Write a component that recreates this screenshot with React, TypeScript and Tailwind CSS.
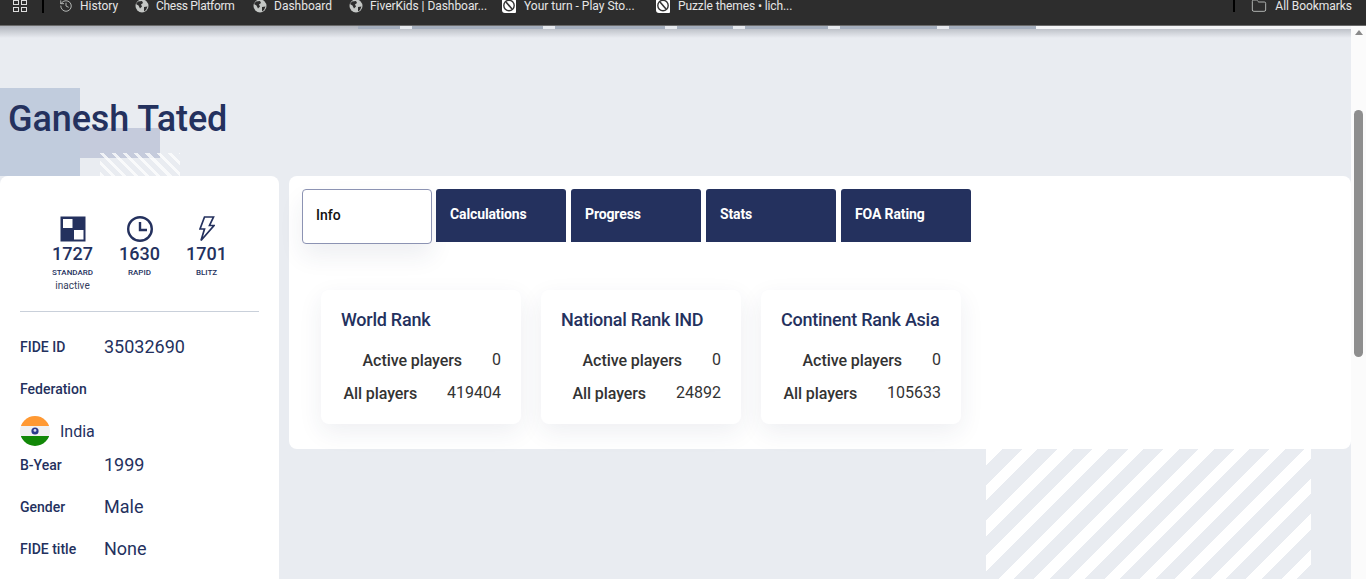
import React from 'react'
import { History, Folder } from 'lucide-react'

const Globe = () => (
    <svg width="14" height="14" viewBox="0 0 14 14" className="shrink-0">
        <circle cx="7" cy="7" r="6.5" fill="#c4c7c5" />
        <path d="M3 2.5 L7 2 L8 4 L6 5.5 L7 7.5 L5 9.5 L3.5 6.5 L1 5 Z M9 8 L12.5 7.5 L11 11 L9 12.5 Z" fill="#2d2d2d" />
    </svg>
)

const Lichess = () => (
    <svg width="16" height="17" viewBox="0 0 16 17" className="shrink-0">
        <path d="M4 1 H12 Q15 1 15 4 V15 Q15 16 14 16 H4 Q1 16 1 13 V4 Q1 1 4 1 Z" fill="#fff" />
        <circle cx="8" cy="8.5" r="5.2" fill="none" stroke="#333" strokeWidth="1.4" />
        <path d="M5 5 L11 12" stroke="#333" strokeWidth="1.6" />
    </svg>
)

const bookmarks = [
    { label: 'Chess Platform', icon: <Globe />, w: 'w-[118px]', t: 'tracking-[-0.3px]' },
    { label: 'Dashboard', icon: <Globe />, w: 'w-[96px]', t: '' },
    { label: 'FiverKids | Dashboar...', icon: <Globe />, w: 'w-[152px]', t: 'tracking-[-0.05px]' },
    { label: 'Your turn - Play Sto...', icon: <Lichess />, w: 'w-[154px]', t: '' },
    { label: 'Puzzle themes • lich...', icon: <Lichess />, w: 'w-[150px]', t: 'tracking-[-0.1px]' },
]

const BookmarksBar = () => (
    <div className="relative z-20 flex h-[26px] shrink-0 items-start border-b border-[#6a6a6a] bg-[#2d2d2d] font-['Roboto',sans-serif] text-[12px] leading-[12px] text-[#e6e6e6]">
        <div className="ml-[13px] grid h-[12px] w-[14px] grid-cols-2 gap-[2px] overflow-hidden">
            <span className="h-[5px] border border-[#ddd]" />
            <span className="h-[5px] border border-[#ddd]" />
            <span className="h-[5px] border border-[#ddd]" />
            <span className="h-[5px] border border-[#ddd]" />
        </div>
        <div className="ml-[15px] h-[13px] w-[2px] bg-black" />
        <div className="ml-[15px] flex h-[11px] w-[76px] items-center gap-[7px]">
            <History size={14} strokeWidth={1.5} className="shrink-0 text-[#c4c7c5]" />
            <span>History</span>
        </div>
        {bookmarks.map((b) => (
            <div key={b.label} className={`flex h-[11px] items-center gap-[7px] whitespace-nowrap ${b.w}`}>
                {b.icon}
                <span className={b.t}>{b.label}</span>
            </div>
        ))}
        <div className="ml-auto mr-[14px] flex h-[11px] items-center">
            <div className="mr-[16px] h-[13px] w-[2px] bg-black" />
            <Folder size={16} strokeWidth={1.3} className="mr-[8px] shrink-0 text-[#c4c7c5]" />
            <span className="tracking-[-0.05px]">All Bookmarks</span>
        </div>
    </div>
)

const stats = [
    { value: '1727', label: 'STANDARD', note: 'inactive', icon: 'board' },
    { value: '1630', label: 'RAPID', note: '', icon: 'clock' },
    { value: '1701', label: 'BLITZ', note: '', icon: 'bolt' },
]

const StatIcon = ({ name }: { name: string }) => {
    if (name === 'board') {
        return (
            <svg width="26" height="26" viewBox="0 0 26 26">
                <rect x="0.5" y="0.5" width="25" height="25" fill="#24315e" />
                <rect x="3" y="3" width="9.5" height="9" fill="#fff" />
                <rect x="14" y="14" width="9.5" height="9.5" fill="#fff" />
            </svg>
        )
    }
    if (name === 'clock') {
        return (
            <svg width="26" height="26" viewBox="0 0 26 26" fill="none" stroke="#24315e" strokeWidth="2.4">
                <circle cx="13" cy="13" r="11.8" />
                <path d="M13 6 V14 H20" />
            </svg>
        )
    }
    return (
        <svg width="16" height="26" viewBox="0 0 16 26" fill="none" stroke="#24315e" strokeWidth="1.7" strokeLinejoin="miter">
            <path d="M5.5 1 H14.5 L10.5 9.5 H15 L2 24.5 L5.5 13 H1 Z" />
        </svg>
    )
}

const details = [
    { label: 'B-Year', value: '1999' },
    { label: 'Gender', value: 'Male' },
    { label: 'FIDE title', value: 'None' },
]

const Sidebar = () => (
    <aside className="h-[500px] w-[279px] shrink-0 rounded-t-[8px] bg-white px-[20px] pt-[40px]">
        <div className="flex justify-center gap-[27px] border-b border-[#c9d0da] pb-[18px]">
            {stats.map((s) => (
                <div key={s.label} className="flex w-[40px] flex-col items-center">
                    <StatIcon name={s.icon} />
                    <div className="-mt-[1px] text-[18px] font-medium leading-[25px] text-[#24315e]">{s.value}</div>
                    <div className="mt-[1px] text-[8px] font-medium leading-[12px] text-[#24315e]">{s.label}</div>
                    <div className="h-[14px] whitespace-nowrap text-[10px] leading-[14px] text-[#333c5c]">{s.note}</div>
                </div>
            ))}
        </div>
        <div className="mt-[14px] flex h-[42px] items-center">
            <div className="w-[84px] text-[14px] font-medium text-[#24315e]">FIDE ID</div>
            <div className="pb-[2px] text-[18px] text-[#24315e]">35032690</div>
        </div>
        <div className="flex h-[42px] items-center text-[14px] font-medium text-[#24315e]">Federation</div>
        <div className="mb-[-2px] mt-[6px] flex h-[30px] items-center gap-[10px]">
            <svg width="30" height="30" viewBox="0 0 30 30" className="shrink-0">
                <defs>
                    <clipPath id="flag">
                        <circle cx="15" cy="15" r="15" />
                    </clipPath>
                </defs>
                <g clipPath="url(#flag)">
                    <rect width="30" height="10" fill="#ff9933" />
                    <rect y="10" width="30" height="10" fill="#f1f1f1" />
                    <rect y="20" width="30" height="10" fill="#128807" />
                </g>
                <circle cx="15" cy="15" r="3.6" fill="#2b3a8c" />
                <circle cx="15" cy="14.4" r="1.4" fill="#d8dcf0" />
            </svg>
            <span className="pt-[2px] text-[16px] text-[#24315e]">India</span>
        </div>
        {details.map((d) => (
            <div key={d.label} className="flex h-[42px] items-center">
                <div className="w-[84px] text-[14px] font-medium text-[#24315e]">{d.label}</div>
                <div className="pb-[2px] text-[18px] text-[#24315e]">{d.value}</div>
            </div>
        ))}
    </aside>
)

const tabs = ['Calculations', 'Progress', 'Stats', 'FOA Rating']

const ranks = [
    { title: 'World Rank', active: '0', all: '419404' },
    { title: 'National Rank IND', active: '0', all: '24892' },
    { title: 'Continent Rank Asia', active: '0', all: '105633' },
]

const RankCard = ({ title, active, all }: { title: string; active: string; all: string }) => (
    <div className="h-[134px] w-[200px] rounded-[8px] bg-white px-[20px] pt-[17px] shadow-[0_8px_24px_rgba(36,49,94,0.08)]">
        <div className="whitespace-nowrap text-[18px] font-medium leading-[26px] tracking-[-0.25px] text-[#24315e]">{title}</div>
        <div className="mt-[14px] flex h-[26px] items-center justify-end">
            <span className="pt-[2px] text-[16px] font-medium tracking-[-0.08px] text-[#333]">Active players</span>
            <span className="ml-[30px] text-[16px] text-[#333]">{active}</span>
        </div>
        <div className="mt-[7px] flex h-[26px] items-center justify-end">
            <span className="pt-[2px] text-[16px] font-medium tracking-[-0.08px] text-[#333]">All players</span>
            <span className="ml-[30px] text-[16px] text-[#333]">{all}</span>
        </div>
    </div>
)

const stripBlocks = ['w-[42px]', 'w-[131px]', 'w-[110px]', 'w-[56px]', 'w-[83px]', 'w-[97px]', 'w-[87px]']

const App = () => {
    return (
        <div className="flex h-[579px] w-[1366px] flex-col overflow-hidden bg-white font-['Roboto',sans-serif]">
            <BookmarksBar />
            <div className="flex min-h-0 flex-1">
                <main className="relative min-w-0 flex-1 overflow-hidden bg-[#e9ecf1]">
                    {/* decorations behind the content */}
                    <div className="absolute left-0 top-[62px] h-[88px] w-[80px] bg-[#c1ccdd]" />
                    <div className="absolute left-[80px] top-[102px] h-[30px] w-[80px] bg-[#c5cbdc]" />
                    <div className="absolute left-[100px] top-[127px] h-[30px] w-[80px] bg-[repeating-linear-gradient(45deg,transparent_0,transparent_5px,rgba(255,255,255,0.75)_5px,rgba(255,255,255,0.75)_8px)]" />
                    <div className="absolute left-[986px] top-[404px] h-[160px] w-[325px] bg-[repeating-linear-gradient(135deg,#e9ecf1_0,#e9ecf1_14px,#ffffff_14px,#ffffff_25px)]" />
                    <div className="absolute inset-x-0 top-0 h-[12px] bg-gradient-to-b from-[#b0b4bc] to-transparent" />
                    <div className="absolute inset-x-0 top-0 flex h-[3px]">
                        <div className="w-[358px] shrink-0" />
                        {stripBlocks.map((w, i) => (
                            <React.Fragment key={i}>
                                <div className={`shrink-0 bg-[#a4aebd] ${w}`} />
                                {i < stripBlocks.length - 1 && <div className="w-[12px] shrink-0 bg-[#e6e9ee]" />}
                            </React.Fragment>
                        ))}
                        <div className="flex-1 bg-[#f4f5f7]" />
                    </div>

                    <div className="relative">
                        <h1 className="pl-[8px] pt-[71px] text-[36px] font-medium leading-[44px] tracking-[-0.1px] text-[#24315e]">Ganesh Tated</h1>
                        <div className="mt-[35px] flex items-start gap-[10px]">
                            <Sidebar />
                            <section className="h-[273px] flex-1 rounded-[8px] bg-white pl-[13px] pt-[13px]">
                                <div className="flex gap-[5px]">
                                    <div className="-mr-[1px] flex h-[55px] w-[130px] items-center rounded-[4px] border border-[#8c93b3] bg-white pb-[2px] pl-[13px] text-[14px] font-medium text-[#111] shadow-[0_12px_24px_rgba(36,49,94,0.08)]">
                                        Info
                                    </div>
                                    {tabs.map((t) => (
                                        <div key={t} className="flex h-[53px] w-[130px] items-center rounded-t-[3px] bg-[#24315e] pb-[2px] pl-[14px] text-[14px] font-bold tracking-[-0.12px] text-white">
                                            {t}
                                        </div>
                                    ))}
                                </div>
                                <div className="ml-[19px] mt-[46px] flex gap-[20px]">
                                    {ranks.map((r) => (
                                        <RankCard key={r.title} {...r} />
                                    ))}
                                </div>
                            </section>
                        </div>
                    </div>
                </main>
                <div className="relative w-[15px] shrink-0 bg-[#fbfbfb]">
                    <div className="mx-auto mt-[4px] h-0 w-0 border-x-[4px] border-b-[5px] border-x-transparent border-b-[#8a8a8a]" />
                    <div className="mx-auto mt-[75px] h-[247px] w-[9px] rounded-full bg-[#8e8e8e]" />
                </div>
            </div>
        </div>
    )
}

export default App
